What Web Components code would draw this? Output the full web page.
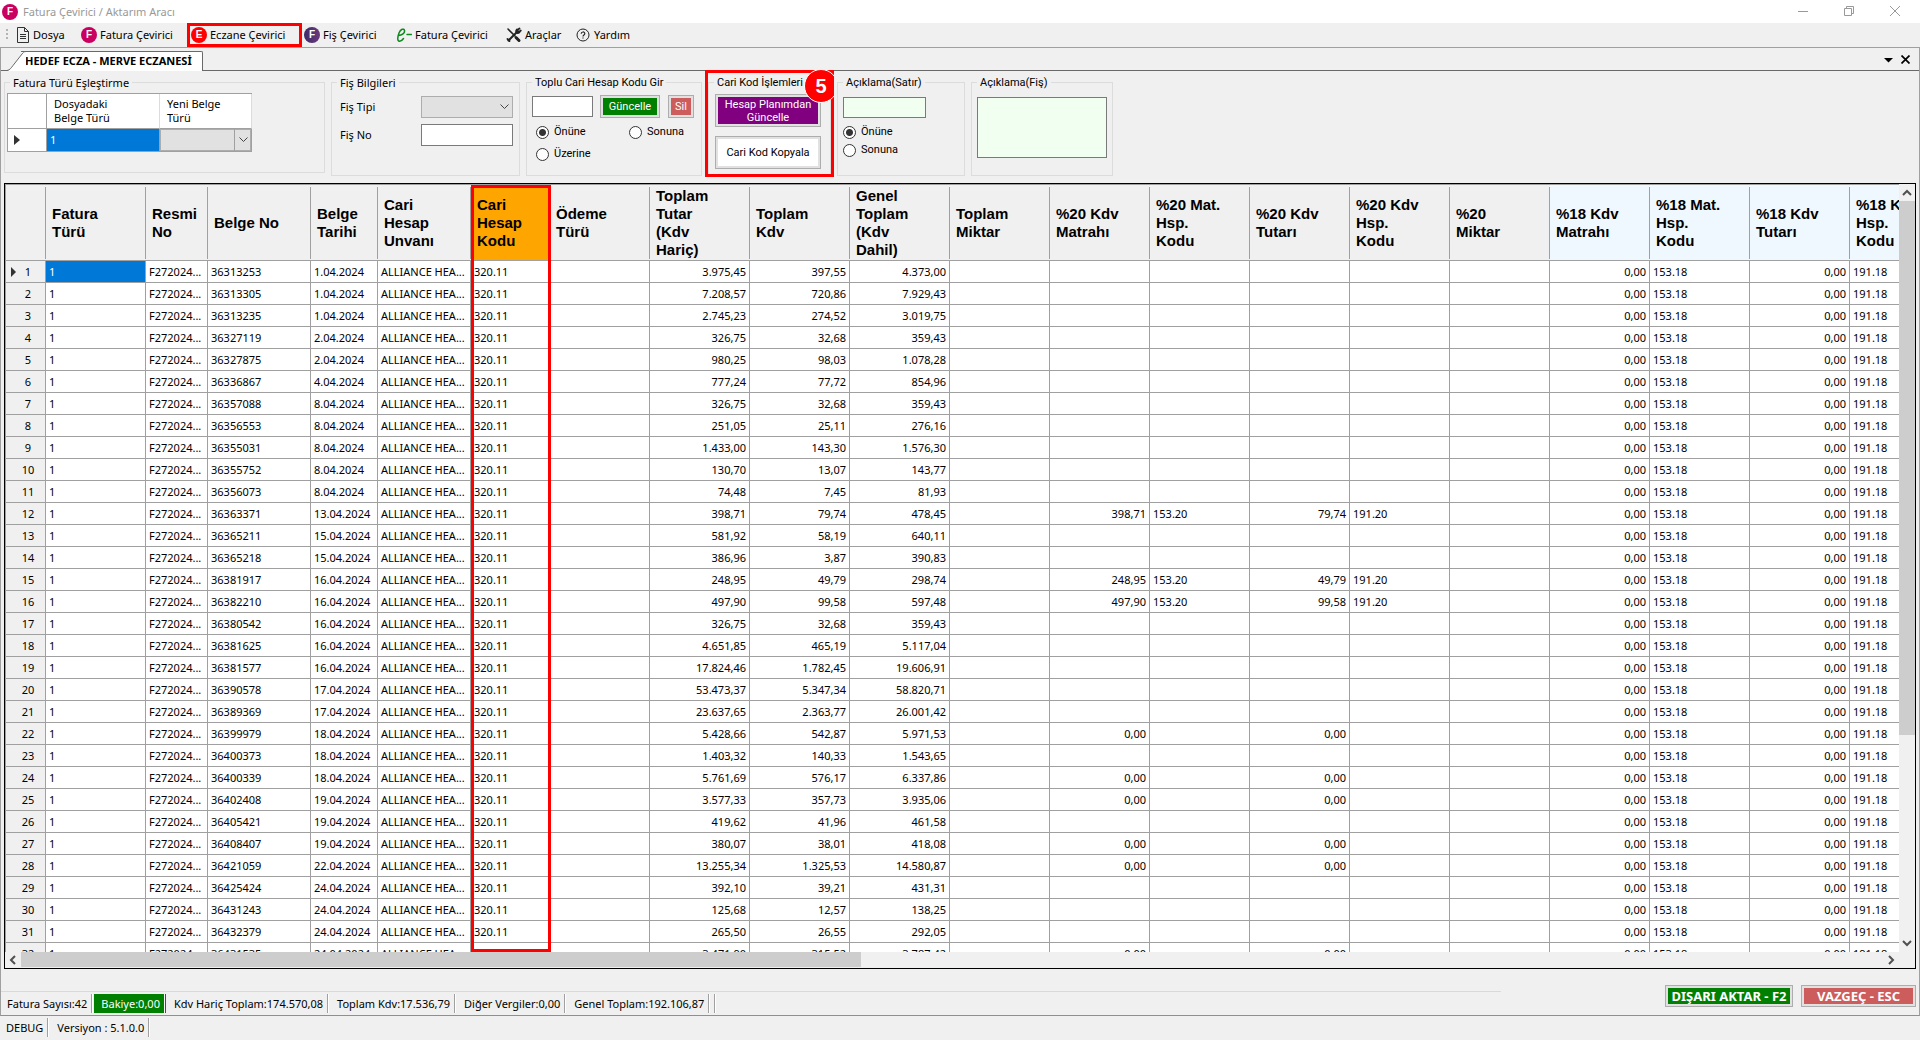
<!DOCTYPE html>
<html lang="tr">
<head>
<meta charset="utf-8">
<title>Fatura Çevirici / Aktarım Aracı</title>
<style>
html, body { margin: 0; height: 100%; background: #f0f0f0; overflow: hidden; }
body { font-family: "Noto Sans", "Open Sans", sans-serif; font-size: 11px; line-height: 14px; color: #000; }
</style>
</head>
<body>
<fc-app></fc-app>

<template id="app">
<style>
:host { display: flex; flex-direction: column; height: 100vh; }
.client { flex: 1; min-height: 0; display: flex; flex-direction: column; border: 1px solid #a0a0a0; border-bottom-color: #8f8f8f; box-sizing: border-box; }
.form { display: flex; align-items: flex-start; gap: 6px; padding: 4px 3px 7px; }
.compact { font-family: Roboto, sans-serif; }
fc-grid { flex: 1; min-height: 0; margin: 0 3px; }
.row { display: flex; align-items: center; }
.fields { display: grid; grid-template-columns: 81px 92px; row-gap: 6px; padding: 6px 0 0 8px; align-items: center; }
input, textarea { box-sizing: border-box; border: 1px solid #7a7a7a; background: #fff; margin: 0; padding: 0 3px; font: inherit; border-radius: 0; resize: none; display: block; }
.fields input { height: 22px; width: 100%; }
.bulk { padding: 5px 7px 0 5px; }
.bulk .row input { width: 61px; height: 21px; margin-right: 7px; }
.bulk .row fc-button + fc-button { margin-left: 8px; }
.opts { display: grid; grid-template-columns: 93px auto; grid-auto-rows: 22px; padding: 3px 0 0 4px; align-items: center; }
.actions { display: flex; flex-direction: column; gap: 9px; padding: 4px 8px 0 6px; }
.note { padding: 7px 6px 0 5px; }
.note input { width: 83px; height: 21px; margin-bottom: 5px; background: #f0fff0; }
.note fc-radio { height: 18px; }
.note textarea { width: 130px; height: 61px; background: #f0fff0; }
.mark { position: absolute; inset: -5px -3px -1px -3px; border: 3px solid #f00; pointer-events: none; }
.step { position: absolute; right: -3px; top: -5px; width: 30px; height: 33px; overflow: hidden; }
.step b { display: block; box-sizing: border-box; width: 34px; height: 34px; margin-top: -1px; border: 1px solid #fff; border-radius: 50%; background: #f00; color: #fff; font: bold 20px/32px "Liberation Sans", Arial, sans-serif; text-align: center; }
.bottom { display: flex; align-items: flex-start; padding: 0 3px 0 0; height: 46px; }
.left { flex: 1; margin: 22px 164px 0 0; border-top: 1px solid #d9d9d9; padding: 2px 0 0 3px; }
.right { display: flex; gap: 8px; padding-top: 16px; }
.foot { display: flex; padding: 2px 0 3px 3px; height: 19px; }
</style>
<fc-titlebar></fc-titlebar>
<fc-menubar></fc-menubar>
<div class="client">
  <fc-tabs>HEDEF ECZA - MERVE ECZANESİ</fc-tabs>
  <div class="form">
    <fc-group label="Fatura Türü Eşleştirme" style="--w:321px;--h:98px"><fc-mapping></fc-mapping></fc-group>
    <fc-group label="Fiş Bilgileri" style="--w:189px">
      <div class="fields">
        <label for="tip">Fiş Tipi</label><fc-select label="Fiş Tipi"></fc-select>
        <label for="no">Fiş No</label><input id="no" type="text">
      </div>
    </fc-group>
    <fc-group class="compact" label="Toplu Cari Hesap Kodu Gir" style="--w:176px">
      <div class="bulk">
        <div class="row"><input type="text" aria-label="Cari hesap kodu"><fc-button style="--w:60px;--h:23px;--bg:#008000;--fg:#fff">Güncelle</fc-button><fc-button style="--w:26px;--h:23px;--bg:#cd5c5c;--fg:#fff">Sil</fc-button></div>
        <div class="opts"><fc-radio checked>Önüne</fc-radio><fc-radio>Sonuna</fc-radio><fc-radio>Üzerine</fc-radio></div>
      </div>
    </fc-group>
    <fc-group class="compact" label="Cari Kod İşlemleri" style="--w:123px">
      <div class="actions">
        <fc-button style="--w:106px;--h:33px;--bg:#800080;--fg:#fff">Hesap Planımdan Güncelle</fc-button>
        <fc-button style="--w:106px;--h:33px;--bg:#fff">Cari Kod Kopyala</fc-button>
      </div>
      <div class="mark"></div>
      <div class="step"><b>5</b></div>
    </fc-group>
    <fc-group class="compact" label="Açıklama(Satır)" style="--w:128px">
      <div class="note"><input type="text" aria-label="Açıklama (satır)"><fc-radio checked>Önüne</fc-radio><fc-radio>Sonuna</fc-radio></div>
    </fc-group>
    <fc-group class="compact" label="Açıklama(Fiş)" style="--w:142px">
      <div class="note"><textarea aria-label="Açıklama (fiş)"></textarea></div>
    </fc-group>
  </div>
  <fc-grid></fc-grid>
  <div class="bottom">
    <div class="left"><fc-status items="Fatura Sayısı:42|*Bakiye:0,00|Kdv Hariç Toplam:174.570,08|Toplam Kdv:17.536,79|Diğer Vergiler:0,00|Genel Toplam:192.106,87" tail></fc-status></div>
    <div class="right">
      <fc-button style="--w:128px;--h:22px;--bg:#008000;--fg:#fff;--font:bold 13px/14px 'Noto Sans',sans-serif">DIŞARI AKTAR - F2</fc-button>
      <fc-button style="--w:115px;--h:22px;--bg:#cd5c5c;--fg:#fff;--font:bold 13px/14px 'Noto Sans',sans-serif">VAZGEÇ - ESC</fc-button>
    </div>
  </div>
</div>
<div class="foot"><fc-status items="DEBUG|Versiyon : 5.1.0.0"></fc-status></div>
</template>

<template id="titlebar">
<style>
:host { display: flex; align-items: center; height: 23px; background: #fff; color: #999; padding: 0 2px; }
h1 { flex: 1; margin: 0 0 0 5px; font: inherit; }
button { width: 46px; height: 23px; padding: 0 0 2px; border: 0; background: none; display: flex; align-items: center; justify-content: center; }
svg { display: block; fill: none; stroke: #999; }
</style>
<fc-badge letter="F" color="#c9005f"></fc-badge>
<h1>Fatura Çevirici / Aktarım Aracı</h1>
<button aria-label="Simge durumuna küçült"><svg width="10" height="10"><path d="M0 5.5H10"/></svg></button>
<button aria-label="Önceki boyut"><svg width="10" height="10"><path d="M.5 2.5H7.5V9.500H.5ZM2.500 2.500V.5H9.500V7.500H7.500"/></svg></button>
<button aria-label="Kapat"><svg width="10" height="10"><path d="M0 0L10 10M10 0L0 10"/></svg></button>
</template>

<template id="menubar">
<style>
:host { display: flex; align-items: stretch; height: 24px; padding-left: 6px; }
.grip { width: 2px; margin: 6px 8px 0 0; height: 12px; background: repeating-linear-gradient(#b4b4b4 0 2px, transparent 2px 4px); }
button { display: flex; align-items: center; gap: 3px; border: 0; background: none; padding: 0; margin-right: 13px; font: inherit; color: inherit; white-space: nowrap; position: relative; }
svg { display: block; flex: none; }
button i { position: absolute; inset: 0 -11px 0 -4px; border: 3px solid #f00; }
</style>
<span class="grip"></span>
<button style="width:52px"><svg width="14" height="16" fill="none" stroke="#333"><path d="M1.500 .5H8.500L12.500 4.500V15.500H1.500ZM8.500 .5V4.500H12.500M4 7.500H10M4 9.500H10M4 11.500H10"/></svg>Dosya</button>
<button style="width:97px"><fc-badge letter="F" color="#c9005f"></fc-badge>Fatura Çevirici</button>
<button style="width:100px"><fc-badge letter="E" color="#f00"></fc-badge>Eczane Çevirici<i></i></button>
<button style="width:79px"><fc-badge letter="F" color="linear-gradient(90deg,#3b2a6b,#6b3a7c)"></fc-badge>Fiş Çevirici</button>
<button style="width:97px"><svg width="16" height="16" fill="none" stroke="#0c8a1c" stroke-width="1.500" stroke-linecap="round"><path d="M2.500 8.500C6 8.500 9 6 8.500 3.500C8 1 4.500 2 3 6C1.500 10 1 14 3.500 14.200C5 14.300 6.500 13 7.500 11.500M11 7.500H15.500"/></svg>Fatura Çevirici</button>
<button style="width:56px"><svg width="16" height="16" fill="none" stroke="#222" stroke-linecap="round"><path stroke-width="1.600" d="M2 2L9 9"/><path stroke-width="3" d="M10 10.500L13 13.500"/><path stroke-width="2" d="M2.500 13.500L10.500 5.500"/><path stroke-width="1.800" d="M13.500 1.500L11 3.200L12.800 5.200L14.800 3.500M11 2.500C9.500 4 10.200 5 10.500 5.500C11.500 6.300 12.500 6 13.500 5.200M1.500 12L3.500 14"/></svg>Araçlar</button>
<button><svg width="16" height="16" fill="none" stroke="#222"><circle cx="8" cy="8" r="6"/><path stroke-width="1.200" d="M6.200 6.800C6.200 4.400 9.800 4.400 9.800 6.600C9.800 8 8 7.800 8 9.400M8 10.400V11.600"/></svg>Yardım</button>
</template>

<template id="tabs">
<style>
:host { display: flex; align-items: flex-end; height: 22px; border-bottom: 1px solid #696969; padding-left: 6px; font-weight: bold; }
.tab { display: flex; height: 20px; margin-bottom: -1px; }
svg { display: block; }
button { all: unset; box-sizing: border-box; height: 20px; padding: 0 10px 2px 4px; margin-left: -5px; background: #fff; border-top: 1px solid #696969; border-right: 1px solid #696969; border-radius: 0 2px 0 0; line-height: 17px; }
.tab svg { position: relative; }
.tools { margin-left: auto; display: flex; gap: 8px; padding: 0 9px 6px 0; }
</style>
<div class="tab"><svg width="19" height="20"><path d="M0 20C3 19 4 17 6 14.500L15 3C16 1.500 17 .5 19 .5V20Z" fill="#fff"/><path d="M0 19.500C3 19 4 17 6 14.500L15 3C16 1.500 17 .5 19 .5" fill="none" stroke="#696969"/></svg><button><slot></slot></button></div>
<div class="tools"><svg width="9" height="9"><path d="M0 3H9L4.500 7.500Z"/></svg><svg width="9" height="9" stroke="#000" stroke-width="1.700"><path d="M.5 .5L8.500 8.500M8.500 .5L.5 8.500"/></svg></div>
</template>

<template id="mapping">
<style>
:host { display: block; padding: 3px 0 0 2px; }
table { border-collapse: separate; border-spacing: 0; table-layout: fixed; width: 245px; border: solid #a0a0a0; border-width: 1px 0 0 1px; background: #fff; }
th { height: 34px; padding: 0 7px; font-weight: normal; text-align: left; border-bottom: 1px solid #a0a0a0; border-right: 1px solid #dcdcdc; }
th:first-child, td { border-right: 1px solid #a0a0a0; }
td { height: 22px; padding: 0 3px; border-bottom: 1px solid #a0a0a0; }
td.sel { background: #0078d7; color: #fff; }
td.combo { padding: 0; }
svg { display: block; margin-left: 3px; }
</style>
<table>
<colgroup><col style="width:39px"><col style="width:113px"><col></colgroup>
<tr><th></th><th>Dosyadaki<br>Belge Türü</th><th>Yeni Belge<br>Türü</th></tr>
<tr><td><svg width="6" height="10"><path d="M0 0L6 5L0 10Z" fill="#333"/></svg></td><td class="sel">1</td><td class="combo"><fc-select label="Yeni Belge Türü" split></fc-select></td></tr>
</table>
</template>

<template id="grid">
<style>
:host { display: grid; grid-template: minmax(0,1fr) 16px / minmax(0,1fr) 16px; border: 1px solid #000; box-sizing: border-box; background: #f0f0f0; }
.view { position: relative; overflow: hidden; border: solid #a0a0a0; border-width: 1px 0 0 1px; background: #fff; }
table { border-collapse: separate; border-spacing: 0; table-layout: fixed; }
th, td { box-sizing: border-box; overflow: hidden; white-space: nowrap; border-bottom: 1px solid #a0a0a0; }
thead th { height: 76px; padding: 0 6px; text-align: left; white-space: normal; font: bold 15px/18px "Liberation Sans", Arial, sans-serif; background: linear-gradient(#a0a0a0,#a0a0a0) right center / 1px 72px no-repeat #f0f0f0; }
thead th.blue { background-color: #f0f8ff; }
thead th.kod { background: #ffa500; }
td { height: 22px; padding: 0 3px; border-right: 1px solid #a0a0a0; }
td.n { text-align: right; }
td.sel { background: #0078d7; color: #fff; }
tbody th { height: 22px; padding: 0 6px 0 5px; font-weight: normal; background: #f0f0f0; border-right: 1px solid #a0a0a0; }
tbody th div { display: grid; grid-template-columns: 6px 1fr; align-items: center; }
tbody th span { grid-column: 2; grid-row: 1; }
tbody th svg { grid-column: 1; grid-row: 1; display: block; }
.mark { position: absolute; box-sizing: border-box; left: 465px; width: 80px; top: 0; bottom: 0; border: 3px solid #f00; }
</style>
<div class="view">
  <table><colgroup></colgroup><thead><tr></tr></thead><tbody></tbody></table>
  <div class="mark"></div>
</div>
<fc-scrollbar vertical style="--len:534px"></fc-scrollbar>
<fc-scrollbar style="--len:840px"></fc-scrollbar>
</template>

<script>
function define(name, html, setup) {
  customElements.define(name, class extends HTMLElement {
    connectedCallback() {
      if (this.shadowRoot) return;
      const root = this.attachShadow({ mode: "open" });
      if (typeof html === "function") root.innerHTML = html(this);
      else root.append(document.getElementById(html).content.cloneNode(true));
      if (setup) setup(root, this);
    }
  });
}

define("fc-badge", el => `<style>
:host { display: block; flex: none; width: 16px; height: 16px; border-radius: 50%; background: ${el.getAttribute("color")}; color: #fff; font: bold 10px/16px "Liberation Sans", Arial, sans-serif; text-align: center; }
</style>${el.getAttribute("letter")}`);

define("fc-button", () => `<style>
:host { display: block; }
button { box-sizing: border-box; display: block; width: var(--w); height: var(--h); padding: 0 3px; border: 1px solid #adadad; border-radius: 0; background: var(--bg); color: var(--fg, #000); box-shadow: inset 0 0 0 2px #e1e1e1; font: var(--font, inherit); line-height: 13px; }
</style><button type="button"><slot></slot></button>`);

define("fc-radio", el => `<style>
:host { display: flex; align-items: center; }
label { display: flex; align-items: center; gap: 5px; }
input { appearance: none; box-sizing: border-box; width: 13px; height: 13px; margin: 0; border: 1px solid #333; border-radius: 50%; background: #fff; }
input:checked { background: radial-gradient(#333 0 3px, #fff 4px); }
</style><label><input type="radio"${el.hasAttribute("checked") ? " checked" : ""}><span><slot></slot></span></label>`);

define("fc-select", el => `<style>
:host { display: grid; height: 22px; align-items: center; }
select, .arrow { grid-area: 1 / 1; }
select { appearance: none; box-sizing: border-box; width: 100%; height: 22px; margin: 0; border: 1px solid #adadad; border-radius: 0; background: #e1e1e1; font: inherit; }
.arrow { justify-self: end; width: 17px; height: 22px; box-sizing: border-box; display: grid; place-items: center; pointer-events: none; }
.split { border-left: 1px solid #a0a0a0; }
</style><select aria-label="${el.getAttribute("label")}"></select><span class="arrow${el.hasAttribute("split") ? " split" : ""}"><svg width="9" height="6" fill="none" stroke="#444"><path d="M.5 .5L4.500 4.500L8.500 .5"/></svg></span>`);

define("fc-group", el => `<style>
:host { display: block; position: relative; width: var(--w); }
fieldset { box-sizing: border-box; min-width: 0; width: 100%; min-height: var(--h, 101px); margin: 0; padding: 0; border: 1px solid #dcdcdc; }
legend { height: 15px; margin-left: 5px; padding: 0 3px; line-height: 15px; white-space: nowrap; }
</style><fieldset><legend>${el.getAttribute("label")}</legend><slot></slot></fieldset>`);

define("fc-status", el => `<style>
:host { display: flex; gap: 2px; height: 19px; }
span { padding: 0 4px 0 7px; border-right: 1px solid #a0a0a0; box-shadow: 1px 0 #fff; line-height: 19px; white-space: nowrap; }
span:first-of-type { padding-left: 3px; }
.on { background: #008000; color: #fff; border-color: #fff; box-shadow: 1px 0 #008000; }
i { width: 3px; border-right: 1px solid #a0a0a0; box-shadow: 1px 0 #fff; }
</style>${el.getAttribute("items").split("|").map(t => t[0] === "*" ? `<span class="on">${t.slice(1)}</span>` : `<span>${t}</span>`).join("")}${el.hasAttribute("tail") ? "<i></i>" : ""}`);

define("fc-scrollbar", el => {
  const v = el.hasAttribute("vertical");
  const tip = d => `<svg width="16" height="17" fill="none" stroke="#505050" stroke-width="2"><path d="${d}"/></svg>`;
  return `<style>
:host { display: flex; flex-direction: ${v ? "column" : "row"}; overflow: hidden; }
svg { flex: none; display: block; }
.track { flex: 1; display: flex; flex-direction: inherit; }
.thumb { flex: none; background: #cdcdcd; ${v ? "height" : "width"}: var(--len); ${v ? "" : "margin-bottom: 1px;"} }
</style>${tip(v ? "M4 11L8 7L12 11" : "M10 4L6 8L10 12")}<div class="track"><div class="thumb"></div></div>${tip(v ? "M4 6L8 10L12 6" : "M6 4L10 8L6 12")}`;
});

define("fc-titlebar", "titlebar");
define("fc-menubar", "menubar");
define("fc-tabs", "tabs");
define("fc-mapping", "mapping");

const COLUMNS = [
  [100, "Fatura<br>Türü"], [62, "Resmi<br>No"], [103, "Belge No"], [67, "Belge<br>Tarihi"],
  [93, "Cari<br>Hesap<br>Unvanı"], [79, "Cari<br>Hesap<br>Kodu", "kod"], [100, "Ödeme<br>Türü"],
  [100, "Toplam<br>Tutar<br>(Kdv<br>Hariç)"], [100, "Toplam<br>Kdv"], [100, "Genel<br>Toplam<br>(Kdv<br>Dahil)"],
  [100, "Toplam<br>Miktar"], [100, "%20 Kdv<br>Matrahı"], [100, "%20 Mat.<br>Hsp.<br>Kodu"],
  [100, "%20 Kdv<br>Tutarı"], [100, "%20 Kdv<br>Hsp.<br>Kodu"], [100, "%20<br>Miktar"],
  [100, "%18 Kdv<br>Matrahı", "blue"], [100, "%18 Mat.<br>Hsp.<br>Kodu", "blue"],
  [100, "%18 Kdv<br>Tutarı", "blue"], [100, "%18 Kdv<br>Hsp.<br>Kodu", "blue"]
];
// belge no, tarih, kdv hariç, kdv, genel toplam, %20 matrah, %20 kdv
const ROWS = `36313253 1.04.2024 3.975,45 397,55 4.373,00
36313305 1.04.2024 7.208,57 720,86 7.929,43
36313235 1.04.2024 2.745,23 274,52 3.019,75
36327119 2.04.2024 326,75 32,68 359,43
36327875 2.04.2024 980,25 98,03 1.078,28
36336867 4.04.2024 777,24 77,72 854,96
36357088 8.04.2024 326,75 32,68 359,43
36356553 8.04.2024 251,05 25,11 276,16
36355031 8.04.2024 1.433,00 143,30 1.576,30
36355752 8.04.2024 130,70 13,07 143,77
36356073 8.04.2024 74,48 7,45 81,93
36363371 13.04.2024 398,71 79,74 478,45 398,71 79,74
36365211 15.04.2024 581,92 58,19 640,11
36365218 15.04.2024 386,96 3,87 390,83
36381917 16.04.2024 248,95 49,79 298,74 248,95 49,79
36382210 16.04.2024 497,90 99,58 597,48 497,90 99,58
36380542 16.04.2024 326,75 32,68 359,43
36381625 16.04.2024 4.651,85 465,19 5.117,04
36381577 16.04.2024 17.824,46 1.782,45 19.606,91
36390578 17.04.2024 53.473,37 5.347,34 58.820,71
36389369 17.04.2024 23.637,65 2.363,77 26.001,42
36399979 18.04.2024 5.428,66 542,87 5.971,53 0,00 0,00
36400373 18.04.2024 1.403,32 140,33 1.543,65
36400339 18.04.2024 5.761,69 576,17 6.337,86 0,00 0,00
36402408 19.04.2024 3.577,33 357,73 3.935,06 0,00 0,00
36405421 19.04.2024 419,62 41,96 461,58
36408407 19.04.2024 380,07 38,01 418,08 0,00 0,00
36421059 22.04.2024 13.255,34 1.325,53 14.580,87 0,00 0,00
36425424 24.04.2024 392,10 39,21 431,31
36431243 24.04.2024 125,68 12,57 138,25
36432379 24.04.2024 265,50 26,55 292,05
36431535 24.04.2024 3.471,90 315,52 3.787,42 0,00 0,00`.split("\n").map(r => r.split(" "));

define("fc-grid", "grid", root => {
  root.querySelector("colgroup").innerHTML = `<col style="width:40px">` + COLUMNS.map(c => `<col style="width:${c[0]}px">`).join("");
  root.querySelector("thead tr").innerHTML = "<th></th>" + COLUMNS.map(c => `<th class="${c[2] || ""}">${c[1]}</th>`).join("");
  const num = t => `<td class="n">${t || ""}</td>`;
  const txt = t => `<td>${t || ""}</td>`;
  root.querySelector("tbody").innerHTML = ROWS.map(([no, date, net, vat, sum, base, tax], i) => {
    const coded = base && base !== "0,00";
    return `<tr><th><div>${i ? "" : '<svg width="5" height="10"><path d="M0 0L5 5L0 10Z" fill="#333"/></svg>'}<span>${i + 1}</span></div></th>`
      + `<td${i ? "" : ' class="sel"'}>1</td>` + txt("F272024...") + txt(no) + txt(date) + txt("ALLIANCE HEA...") + txt("320.11") + txt()
      + num(net) + num(vat) + num(sum) + num() + num(base) + txt(coded && "153.20") + num(tax) + txt(coded && "191.20") + num()
      + num("0,00") + txt("153.18") + num("0,00") + txt("191.18") + "</tr>";
  }).join("");
  const width = 40 + COLUMNS.reduce((a, c) => a + c[0], 0);
  root.querySelector("table").style.width = width + "px";
});

define("fc-app", "app");
</script>
</body>
</html>
